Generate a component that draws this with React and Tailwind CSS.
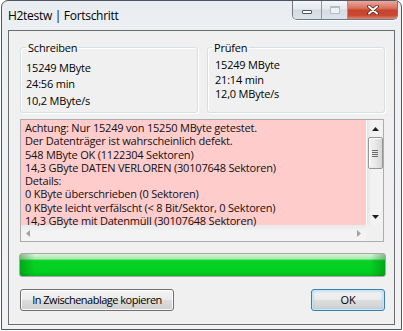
const log = [
  'Achtung: Nur 15249 von 15250 MByte getestet.',
  'Der Datenträger ist wahrscheinlich defekt.',
  '548 MByte OK (1122304 Sektoren)',
  '14,3 GByte DATEN VERLOREN (30107648 Sektoren)',
  'Details:',
  '0 KByte überschrieben (0 Sektoren)',
  '0 KByte leicht verfälscht (< 8 Bit/Sektor, 0 Sektoren)',
  '14,3 GByte mit Datenmüll (30107648 Sektoren)',
]

function TitleButtons() {
  return (
    <div className="flex h-[19px] overflow-hidden rounded-b-[5px] border border-t-0 border-[#6f7885] shadow-[0_1px_0_rgba(255,255,255,0.8)]">
      <div className="flex w-[29px] items-center justify-center border-r border-[#8d97a3] bg-[linear-gradient(#f4f6f9,#e4e9ee_45%,#d3dae2_50%,#dde3ea)]">
        <span className="mt-[3px] h-[4px] w-[10px] rounded-[1px] border border-[#4b5462] bg-white" />
      </div>
      <div className="flex w-[26px] items-center justify-center border-r border-[#8d97a3] bg-[linear-gradient(#f4f6f9,#e4e9ee_45%,#d3dae2_50%,#dde3ea)]">
        <span className="h-[8px] w-[10px] border border-t-2 border-[#b4bcc6] bg-[#eef1f4]" />
      </div>
      <div className="flex w-[49px] items-center justify-center bg-[linear-gradient(#eaa99b,#d9705e_40%,#c7422b_52%,#c94a33_80%,#e08a73)]">
        <svg width="12" height="10" viewBox="0 0 12 10">
          <path d="M2 1.5L10 8.5M10 1.5L2 8.5" stroke="#5a2016" strokeWidth="3.6" strokeLinecap="round" />
          <path d="M2 1.5L10 8.5M10 1.5L2 8.5" stroke="#ffffff" strokeWidth="2" strokeLinecap="round" />
        </svg>
      </div>
    </div>
  )
}

function Group({ title, rows, legendClass, bodyClass }) {
  return (
    <fieldset className="h-[73px] w-[178px] rounded-[3px] border border-[#d5dfe5] shadow-[inset_1px_1px_0_#fff,1px_1px_0_#fff]">
      <legend className={`px-[2px] leading-[15px] ${legendClass}`}>{title}</legend>
      <div className={bodyClass}>
        {rows.map((row) => (
          <p key={row}>{row}</p>
        ))}
      </div>
    </fieldset>
  )
}

function Arrow({ dir, color = '#1e1e1e' }) {
  const paths = {
    up: 'M0 4L3.5 0L7 4Z',
    down: 'M0 0L3.5 4L7 0Z',
    left: 'M4 0L0 3.5L4 7Z',
    right: 'M0 0L4 3.5L0 7Z',
  }
  const vertical = dir === 'up' || dir === 'down'
  return (
    <svg width={vertical ? 7 : 4} height={vertical ? 4 : 7} viewBox={vertical ? '0 0 7 4' : '0 0 4 7'}>
      <path d={paths[dir]} fill={color} />
    </svg>
  )
}

function LogBox() {
  return (
    <div className="mt-[6px] w-[364px] border border-[#abadb3]">
      <div className="flex h-[105px]">
        <div className="flex-1 bg-[#ffcccc] pl-[4px] pt-px leading-[13.3px] text-[#111]">
          {log.map((line) => (
            <p key={line} className="whitespace-nowrap">{line}</p>
          ))}
        </div>
        <div className="flex w-[17px] flex-col items-center border-l border-white bg-[linear-gradient(90deg,#e6e6e6,#f2f2f2_30%,#f2f2f2)]">
          <div className="flex h-[17px] items-center justify-center">
            <Arrow dir="up" />
          </div>
          <div className="flex h-[32px] w-[15px] items-center justify-center rounded-[2px] border border-[#959595] bg-[linear-gradient(90deg,#f3f3f3,#e8e8e8_50%,#d6d6d6)] shadow-[inset_1px_1px_0_#fff]">
            <div className="flex flex-col gap-[1px]">
              <span className="h-px w-[6px] bg-[#6b6b6b]" />
              <span className="h-px w-[6px] bg-[#6b6b6b]" />
              <span className="h-px w-[6px] bg-[#6b6b6b]" />
              <span className="h-px w-[6px] bg-[#6b6b6b]" />
            </div>
          </div>
          <div className="flex-1" />
          <div className="flex h-[17px] items-center justify-center">
            <Arrow dir="down" />
          </div>
        </div>
      </div>
      <div className="flex h-[16px] bg-[linear-gradient(#e9e9e9,#f3f3f3_40%,#f3f3f3)]">
        <div className="flex flex-1 items-center justify-between px-[5px]">
          <Arrow dir="left" color="#a3a3a3" />
          <Arrow dir="right" color="#a3a3a3" />
        </div>
        <div className="w-[17px] bg-[#f0f0f0]" />
      </div>
    </div>
  )
}

function Button({ children, isDefault, className }) {
  return (
    <button
      type="button"
      className={`h-[22px] whitespace-nowrap rounded-[3px] border bg-[linear-gradient(#f2f2f2,#ebebeb_48%,#dddddd_52%,#cfcfcf)] leading-[20px] text-black ${
        isDefault
          ? 'border-[#3c7fb1] shadow-[inset_0_0_0_1px_#c5e8f8,inset_0_0_3px_1px_#9bd4f0]'
          : 'border-[#707070] shadow-[inset_0_0_0_1px_rgba(255,255,255,0.85)]'
      } ${className}`}
    >
      {children}
    </button>
  )
}

export default function App() {
  return (
    <div className="h-[331px] w-[403px] bg-white font-['Open_Sans',sans-serif] text-[11px] tracking-[-0.2px] text-black">
      <div className="ml-px flex h-[330px] w-[401px] flex-col rounded-t-[7px] border border-[#4f5661] bg-[linear-gradient(#e9edf1,#eef1f4_20%,#f0f2f4)]">
        <div className="flex h-[29px] items-start justify-between pl-[6px] pr-[3px]">
          <span className="pt-[7px] text-[12px] leading-[16px] tracking-[-0.3px]">H2testw | Fortschritt</span>
          <TitleButtons />
        </div>

        <div className="mx-[6px] flex h-[295px] flex-col border border-[#6d6d6d] bg-[#f0f0f0] pl-[11px]">
          <div className="mt-[9px] flex gap-[9px]">
            <Group
              title="Schreiben"
              rows={['15249 MByte', '24:56 min', '10,2 MByte/s']}
              legendClass="ml-[5px]"
              bodyClass="pl-[5px] pt-[5px] leading-[16.3px]"
            />
            <Group
              title="Prüfen"
              rows={['15249 MByte', '21:14 min', '12,0 MByte/s']}
              legendClass="ml-[4px]"
              bodyClass="pl-[7px] pt-[3px] leading-[14.7px]"
            />
          </div>

          <LogBox />

          <div className="-ml-px mt-[11px] h-[24px] w-[367px] rounded-[3px] border border-[#a8a8a8] bg-[linear-gradient(90deg,rgba(0,90,10,0.35),transparent_4%,transparent_96%,rgba(0,90,10,0.35)),linear-gradient(#d8f6da,#a8eaad_22%,#07d126_30%,#00d020_82%,#00b81c)]" />

          <div className="mt-[12px] flex w-[365px] justify-between">
            <Button className="w-[154px] tracking-[-0.5px]">In Zwischenablage kopieren</Button>
            <Button isDefault className="w-[74px]">OK</Button>
          </div>
        </div>
      </div>
    </div>
  )
}
